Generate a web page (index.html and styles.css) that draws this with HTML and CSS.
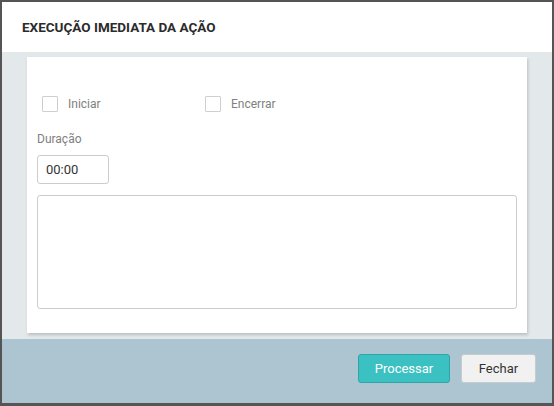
FILE: index.html
```html
<!DOCTYPE html>
<html lang="pt">
<head>
<meta charset="utf-8">
<title>Execução imediata da ação</title>
<link rel="stylesheet" href="styles.css">
</head>
<body>
<div class="dialog">
  <div class="dialog-header">
    <h1 class="dialog-title">EXECUÇÃO IMEDIATA DA AÇÃO</h1>
  </div>
  <div class="dialog-body">
    <div class="card">
      <div class="check-row">
        <label class="check"><span class="check-box"></span><span class="check-label">Iniciar</span></label>
        <label class="check"><span class="check-box"></span><span class="check-label">Encerrar</span></label>
      </div>
      <div class="field-label">Duração</div>
      <div class="time-input">00:00</div>
      <div class="textarea"></div>
    </div>
  </div>
  <div class="dialog-footer">
    <button class="btn btn-primary">Processar</button>
    <button class="btn btn-default">Fechar</button>
  </div>
</div>
</body>
</html>
```
FILE: styles.css
```css
html, body {
  margin: 0;
  padding: 0;
  background: #555555;
  font-family: Roboto, "Liberation Sans", Arial, sans-serif;
}
body {
  padding: 2px 2px 2px 2px;
  width: 554px;
  height: 406px;
  box-sizing: border-box;
}
.dialog {
  width: 550px;
  height: 401px;
  display: flex;
  flex-direction: column;
  background: #fff;
}
.dialog-header {
  height: 50px;
  display: flex;
  align-items: center;
  padding-left: 20px;
  background: #fff;
}
.dialog-title {
  margin: 0;
  font-size: 13.5px;
  font-weight: 700;
  color: #2b2b2b;
  letter-spacing: 0;
}
.dialog-body {
  background: #e3e8eb;
  padding: 5px 25px 6px 25px;
  height: 287px;
  box-sizing: border-box;
}
.card {
  background: #fff;
  height: 276px;
  box-sizing: border-box;
  padding: 39px 10px 0 10px;
  box-shadow: 1px 2px 3px rgba(0, 0, 0, 0.18);
}
.check-row {
  display: flex;
  padding-left: 5px;
}
.check {
  display: flex;
  align-items: center;
  width: 163px;
}
.check-box {
  width: 14px;
  height: 14px;
  border: 1px solid #cfcfcf;
  border-radius: 1px;
  background: #fff;
}
.check-label {
  margin-left: 10px;
  font-size: 12px;
  color: #808080;
}
.field-label {
  margin-top: 20px;
  font-size: 12px;
  line-height: 14px;
  color: #808080;
}
.time-input {
  margin-top: 9px;
  width: 72px;
  height: 29px;
  box-sizing: border-box;
  border: 1px solid #cccccc;
  border-radius: 3px;
  padding-left: 8px;
  font-size: 13px;
  line-height: 27px;
  color: #333;
}
.textarea {
  margin-top: 11px;
  width: 480px;
  height: 114px;
  box-sizing: border-box;
  border: 1px solid #cccccc;
  border-radius: 3px;
}
.dialog-footer {
  flex: 1;
  background: #adc4d1;
  display: flex;
  justify-content: flex-end;
  align-items: flex-start;
  padding: 15px 16px 0 0;
  gap: 11px;
}
.btn {
  height: 29px;
  box-sizing: border-box;
  border-radius: 3px;
  font-family: Roboto, "Liberation Sans", Arial, sans-serif;
  font-size: 13px;
  padding: 0;
  cursor: pointer;
}
.btn-primary {
  width: 92px;
  background: #3cc1c2;
  border: 1px solid #2ea6a7;
  color: #fff;
}
.btn-default {
  width: 75px;
  background: #f1f1f1;
  border: 1px solid #c5cdd2;
  color: #333;
}
```
